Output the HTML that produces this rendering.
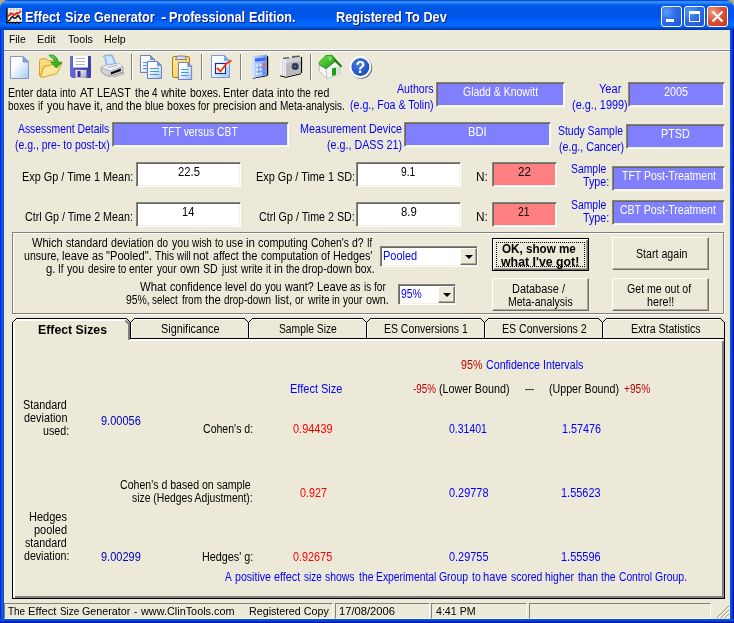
<!DOCTYPE html>
<html>
<head>
<meta charset="utf-8">
<title>Effect Size Generator - Professional Edition.</title>
<style>
*{box-sizing:border-box;margin:0;padding:0}
html,body{width:734px;height:623px;overflow:hidden;background:#ece9d8}
body{font-family:"Liberation Sans",sans-serif;font-size:12.5px;color:#000;position:relative}
.a{position:absolute}
.t{position:absolute;white-space:pre;transform-origin:0 0;display:block}
.b{font-size:12.5px;line-height:14px}
.B{font-size:12.5px;line-height:14px;font-weight:bold}
.m{font-size:11px;line-height:13px}
.T{font-size:14px;line-height:16px;font-weight:bold}
.bl{color:#0000ff}
.nv{color:#0000c0}
.rd{color:#ff0000}
.dr{color:#c00000}
.wh{color:#fff}
.tw{color:#fff;text-shadow:1px 1px 0 #0a1883}
#title{left:0;top:0;width:734px;height:30px;border-radius:8px 8px 0 0;
 background:linear-gradient(to bottom,#0847cc 0,#0b52de 1px,#3a90fc 1.6px,#3088fb 3px,#0c6cf4 4px,#0260eb 5px,#0057e5 7px,#0054e3 10px,#0055eb 17px,#005bf5 20px,#0268fb 23px,#0366f6 25.5px,#0058e0 27px,#004cd0 28px,#0040bc 29px,#0036aa 30px)}
.bdl{left:0;top:30px;width:4px;height:593px;background:linear-gradient(to right,#0019cf 0,#0831d9 25%,#166aee 50%,#0855dd 75%,#0048d8 100%)}
.bdr{left:730px;top:30px;width:4px;height:593px;background:linear-gradient(to right,#0048d8 0,#0855dd 25%,#0441d8 50%,#001dbc 75%,#00138c 100%)}
.bdb{left:0;top:619px;width:734px;height:4px;background:linear-gradient(to bottom,#0048d8 0,#0855dd 25%,#0441d8 50%,#001dbc 75%,#00138c 100%)}
.tb{top:6px;width:21px;height:21px;border:1px solid #fff;border-radius:3px;background:radial-gradient(circle at 25% 25%,#5a9cff 0,#2d6cea 45%,#2054d6 100%)}
.tb.x{background:radial-gradient(circle at 25% 25%,#f09a82 0,#dc5234 45%,#c03820 100%)}
.box{border:1px solid;border-color:#848480 #fff #fff #848480;box-shadow:inset 1px 1px #6a685e,inset -1px -1px #f4f2e8;background:#8080ff;height:25px}
.box.w{background:#fff}
.box.p{background:#ff8080}
.btn{border:1px solid;border-color:#fff #716f64 #716f64 #fff;box-shadow:inset -1px -1px #aca899;background:#ece9d8;width:97px;height:33px}
.cmb{border:1px solid;border-color:#848480 #fff #fff #848480;box-shadow:inset 1px 1px #6a685e,inset -1px -1px #f4f2e8;background:#fff;height:21px}
.cmb i{position:absolute;right:0;top:1px;bottom:1px;width:17px;background:#ece9d8;border:1px solid;border-color:#fff #716f64 #716f64 #fff;box-shadow:inset -1px -1px #aca899}
.cmb i:after{content:"";position:absolute;left:4px;top:6px;border:4px solid transparent;border-top:4px solid #000;border-bottom:0}
.sp{top:603px;height:16px;border:1px solid;border-color:#808080 #fff #fff #808080}
</style>
</head>
<body>
<div id="win" style="position:absolute;left:0;top:0;width:734px;height:623px;will-change:transform">
<div class="a" style="left:0;top:0;width:734px;height:8px;background:#b5ad7a"></div>
<div class="a" id="title">
<svg class="a" style="left:6px;top:8px" width="16" height="16" viewBox="0 0 16 16"><rect x="1" y="0" width="15" height="15" fill="#f4f2ee"/><path d="M1 1.500h15M1 4.500h15M1 7.500h15M1 10.500h15M1 13.500h15" stroke="#b4b0a8" stroke-width="1.500" stroke-dasharray="1.500 1.500"/><path d="M2 8.500l2.500-3 2 .2 1.500 1.500 2.500-2 1.500.5 3-3" fill="none" stroke="#f01010" stroke-width="1.500"/><path d="M2 13l1.500-.5 1.500-2.500 1.500-1.500 1.500 1.500h1.500l2.500-2.500 3 4" fill="none" stroke="#101010" stroke-width="1.400"/><path d="M1 0v15.500M0 14.500h16" stroke="#000" stroke-width="1.200" fill="none"/><path d="M0 2.500h1M0 5.500h1M0 8.500h1M0 11.500h1M3.500 15v1M6.500 15v1M9.500 15v1M12.500 15v1" stroke="#000" stroke-width="1"/></svg>
<div class="a tb" style="left:661px"><div class="a" style="left:4px;top:12px;width:8px;height:3px;background:#fff"></div></div>
<div class="a tb" style="left:684px"><div class="a" style="left:4px;top:4px;width:11px;height:11px;border:1px solid #fff;border-top-width:3px"></div></div>
<div class="a tb x" style="left:707px"><svg class="a" style="left:0;top:0" width="19" height="19"><path d="M4.500 4.500l10 10M14.500 4.500l-10 10" stroke="#fff" stroke-width="2.300" fill="none"/></svg></div>
</div>
<div class="a bdl"></div><div class="a bdr"></div><div class="a bdb"></div>
<div class="a" style="left:4px;top:49px;width:726px;height:3px;background:#808080;border-top:1px solid #fff;border-bottom:1px solid #fff"></div>
<svg class="a" style="left:0;top:52px" width="400" height="30" viewBox="0 52 400 30">
<defs>
<linearGradient id="pg" x1="0" y1="0" x2="1" y2="1"><stop offset="0" stop-color="#fff"/><stop offset=".35" stop-color="#fbfdff"/><stop offset="1" stop-color="#9ccbf0"/></linearGradient>
<linearGradient id="fd" x1="0" y1="0" x2="1" y2="1"><stop offset="0" stop-color="#fbe9a0"/><stop offset="1" stop-color="#f0c850"/></linearGradient>
<linearGradient id="gr" x1="0" y1="0" x2="1" y2="1"><stop offset="0" stop-color="#70e048"/><stop offset="1" stop-color="#1c9a18"/></linearGradient>
<linearGradient id="fl" x1="0" y1="0" x2="1" y2="0"><stop offset="0" stop-color="#6a6ad8"/><stop offset=".5" stop-color="#5050c0"/><stop offset="1" stop-color="#3c3ca8"/></linearGradient>
<linearGradient id="mt" x1="0" y1="0" x2="1" y2="1"><stop offset="0" stop-color="#fff"/><stop offset="1" stop-color="#a0a0b0"/></linearGradient>
<linearGradient id="cl" x1="0" y1="0" x2="1" y2="0"><stop offset="0" stop-color="#c0d4ff"/><stop offset=".6" stop-color="#98b8ff"/><stop offset="1" stop-color="#7090ec"/></linearGradient>
<radialGradient id="hp" cx=".4" cy=".35" r=".7"><stop offset="0" stop-color="#4a80e8"/><stop offset="1" stop-color="#1848b8"/></radialGradient>
<g id="doc"><path d="M.5 .5h10l4 4v13h-14z" fill="url(#pg)" stroke="#7878c0"/><path d="M10.5 .5v4h4z" fill="#58a8f0" stroke="#7878c0" stroke-width=".8"/></g>
<g id="sep"><rect x="0" y="54" width="1" height="26" fill="#808080"/><rect x="1" y="54" width="1" height="26" fill="#fff"/></g>
</defs>
<!-- new -->
<path d="M10.500 56.500h12.500l5.500 5.500v16.500h-18z" fill="url(#pg)" stroke="#8484c8" stroke-width=".9"/>
<path d="M23 56.500v5.500h5.500z" fill="#62acf2" stroke="#8484c8" stroke-width=".8"/>
<!-- open -->
<path d="M39.500 60.500l1.200-1.700h5.800l1.500 2h8v3.500l-12.500 2.400-3 9.800-1-1z" fill="#f8dc84" stroke="#d8a21c" stroke-width="1"/>
<path d="M40.500 76.800l3.300-10.200 8.700-2 9.500-1.600-5 10.500-13.500 3.700z" fill="#fbe89c" stroke="#d8a21c" stroke-width="1"/>
<path d="M49.200 55l4.100.2q4 1.800 5.300 7.100h3.400l-5.600 5.700-5.600-5.700h4.200q-.5-3.800-5-5.800z" fill="url(#gr)" stroke="#0c8a10" stroke-width=".8"/>
<!-- save -->
<path d="M71 56h19a1 1 0 0 1 1 1v20a1 1 0 0 1-1 1h-18l-2-2v-19a1 1 0 0 1 1-1z" fill="url(#fl)"/>
<rect x="73" y="56" width="15" height="11.500" fill="#fff"/>
<path d="M76 58.500h9M76 61.500h9M76 64.500h9" stroke="#a4a4b8" stroke-width="1" stroke-dasharray="2.500 .5"/>
<rect x="75.500" y="70" width="11" height="8" fill="url(#mt)"/>
<rect x="77.500" y="71" width="3" height="6" fill="#3030a0"/>
<!-- print -->
<path d="M103.200 56.300l3.800-1.200h5l3.800 8.600-9.400 2.200-1.200-7.400z" fill="#b4dcff" stroke="#7484e0" stroke-width=".8"/>
<path d="M107 57l3.500-.5 2.500 6-4.500 1z" fill="#d8f0ff" opacity=".8"/>
<path d="M101.200 67.400l5-2 13.400-2.100 3.300 3.100v5.800l-12.500 4-4.200-.4-5-4z" fill="#d4d4dc" stroke="#8c8c94" stroke-width=".8"/>
<path d="M101.200 67.400l5-2 13.400-2.100 3.300 3.100-12.500 4.800z" fill="#ececf2"/>
<path d="M107.500 67.500l10-2.500" stroke="#a8a8b0" stroke-width=".9" fill="none"/>
<path d="M110.400 71.200v5M101.200 67.400l9.200 3.800 12.500-4.800" fill="none" stroke="#9c9ca4" stroke-width=".7"/>
<path d="M111 72.200l9.800-3.600v2.400l-9.800 3.400z" fill="#080808"/>
<path d="M112 75.500l9-3 3 .2v1l-10.500 3.500z" fill="#c8c8d0" stroke="#9090a0" stroke-width=".5"/>
<use href="#sep" x="131"/>
<!-- copy -->
<use href="#doc" x="140" y="55"/>
<path d="M143 62.500h6M143 65.500h4M143 68.500h4" stroke="#4898e0" stroke-width="1"/>
<use href="#doc" x="147" y="61"/>
<path d="M150 68.500h9M150 71.500h9M150 74.500h9" stroke="#4898e0" stroke-width="1"/>
<!-- paste -->
<rect x="172.500" y="56.500" width="17" height="21" rx="1.500" fill="url(#fd)" stroke="#b87c10"/>
<path d="M175.500 59.500l1.500-3.500h8l1.500 3.500z" fill="#d8d8e0" stroke="#787890" stroke-width=".9"/>
<use href="#doc" transform="translate(178 62) scale(.94 1)"/>
<path d="M181 69.500h7.500M181 72.500h7.500M181 75.500h7.500" stroke="#4898e0" stroke-width="1"/>
<use href="#sep" x="201"/>
<!-- check -->
<path d="M211.500 55.500h13l5 5v17h-18z" fill="url(#pg)" stroke="#8098d8"/>
<path d="M224.500 55.500v5h5z" fill="#6ab0f0" stroke="#8098d8" stroke-width=".8"/>
<rect x="215.500" y="63.500" width="10" height="10" fill="#fff" stroke="#103090" stroke-width="1.200"/>
<path d="M217 68l3.500 3.500 6-8 5-3" fill="none" stroke="#ff3000" stroke-width="1.800"/>
<use href="#sep" x="240"/>
<!-- calc -->
<path d="M253 77.500l14-2.500v1.200l-14 2.600z" fill="#000"/>
<path d="M267 56v19.500h1.200v-19z" fill="#000"/>
<path d="M252 56.200l15-1.400v20.500l-15 3z" fill="url(#cl)"/>
<path d="M252.300 56.500l2.200-.2v21.500l-2.200.5z" fill="#dce8ff" opacity=".85"/>
<path d="M255 58.600l10.500-1v3l-10.500 1.200z" fill="#3a6aea"/>
<g fill="#e4ecff"><circle cx="257" cy="65.500" r="1.200"/><circle cx="260.500" cy="65" r="1.100"/><circle cx="257" cy="69.800" r="1.200"/><circle cx="260.500" cy="69.300" r="1.100"/><circle cx="257" cy="74" r="1.200"/><circle cx="260.500" cy="73.500" r="1.100"/></g>
<g fill="#6080e0"><circle cx="264" cy="69" r="1.200"/><circle cx="264" cy="73" r="1.200"/><circle cx="258.800" cy="67.600" r=".9"/><circle cx="262.300" cy="67.200" r=".9"/><circle cx="258.800" cy="71.800" r=".9"/><circle cx="262.300" cy="71.400" r=".9"/></g>
<rect x="262.800" y="63" width="2.600" height="3.800" rx="1" fill="#e86838"/>
<!-- camera -->
<path d="M280 75.200l6 1.600 15-3.500v1l-15 3.500-6-1.600z" fill="#000"/>
<path d="M300.700 57h1.400v16h-1.400z" fill="#000"/>
<path d="M283 57.800l6-.8v2.500l-6 .6z" fill="#505050"/>
<path d="M292 56l8-.5v2.200l-8 .8z" fill="#606060"/>
<path d="M286 58.800l14.700-1.800v15.800l-14.700 3.600z" fill="#b8b8bc"/>
<path d="M286 58.800l14.700-1.800v4l-14.700 2.500z" fill="#d0d0d4"/>
<path d="M280 59.500l6-.7v17.600l-6-1.500z" fill="#f0f0f2"/>
<path d="M282.500 60v15.500M284.500 60v16" stroke="#c8c8cc" stroke-width=".7"/>
<circle cx="295.200" cy="66.400" r="4.600" fill="#d8d8dc"/>
<circle cx="295.200" cy="66.400" r="3.800" fill="#505054"/>
<circle cx="295.200" cy="66.400" r="2.500" fill="#2c2c30"/>
<circle cx="295.200" cy="66.400" r="1.300" fill="#2a6adc"/>
<use href="#sep" x="310"/>
<!-- home -->
<path d="M319.300 64.500l6.700 4.100 1 9.900-7.700-7.300z" fill="#fcfcfc" stroke="#a8a8a8" stroke-width=".7"/>
<path d="M326 68.600l8.700-7 5.800 5.400v7.100l-13.500 4.400z" fill="#f4f4f2" stroke="#b8b8b8" stroke-width=".6"/>
<path d="M337 65.500l3.500 1.500v7.100l-3.500 1.100z" fill="#dcdcdc"/>
<path d="M332 68.400l4.100-1v7.700l-4.100 1z" fill="#18a018"/>
<path d="M332.300 55.400l9.800 10.600-1.200 1.400-7.400-7.400z" fill="#0a7a0a"/>
<path d="M326 55.400h6.300l2.600 6.200-8.900 7.200-6.500-4-.3-2.600z" fill="url(#gr)" stroke="#109010" stroke-width=".8"/>
<path d="M328.500 56.500l2.500 0 1 3-3 2z" fill="#90f070" opacity=".7"/>
<!-- help -->
<circle cx="361.200" cy="67.800" r="11" fill="#30305c" opacity=".75"/>
<circle cx="360.400" cy="67" r="11" fill="#fff"/>
<circle cx="360.400" cy="67" r="9" fill="url(#hp)"/>
<text x="360.400" y="72.500" text-anchor="middle" font-family="Liberation Sans,sans-serif" font-weight="bold" font-size="16" fill="#fff">?</text>
</svg>

<div class="a box" style="left:436px;top:82px;width:129px"></div>
<div class="a box" style="left:628px;top:82px;width:97px"></div>
<div class="a box" style="left:112px;top:122px;width:177px"></div>
<div class="a box" style="left:404px;top:122px;width:147px"></div>
<div class="a box" style="left:626px;top:124px;width:99px"></div>
<div class="a box w" style="left:136px;top:162px;width:105px"></div>
<div class="a box w" style="left:356px;top:162px;width:105px"></div>
<div class="a box p" style="left:492px;top:162px;width:65px"></div>
<div class="a box" style="left:612px;top:166px;width:113px"></div>
<div class="a box w" style="left:136px;top:202px;width:105px"></div>
<div class="a box w" style="left:356px;top:202px;width:105px"></div>
<div class="a box p" style="left:492px;top:202px;width:65px"></div>
<div class="a box" style="left:612px;top:200px;width:113px"></div>

<div class="a" style="left:13px;top:233px;width:712px;height:82px;border:1px solid #fff"></div>
<div class="a" style="left:12px;top:232px;width:712px;height:82px;border:1px solid #808080"></div>
<div class="a cmb" style="left:380px;top:246px;width:98px"><i></i></div>
<div class="a cmb" style="left:398px;top:284px;width:58px"><i></i></div>
<div class="a btn" style="left:492px;top:238px;border-color:#000;box-shadow:inset 1px 1px #fff,inset -1px -1px #716f64,inset -2px -2px #aca899"><div class="a" style="left:3px;top:3px;right:3px;bottom:3px;border:1px dotted #000"></div></div>
<div class="a btn" style="left:612px;top:237px"></div>
<div class="a btn" style="left:492px;top:278px"></div>
<div class="a btn" style="left:612px;top:278px"></div>
<svg class="a" style="left:0;top:0" width="734" height="623" shape-rendering="crispEdges"><rect x="12" y="322" width="1" height="277" fill="#000"/><rect x="13" y="322" width="2" height="275" fill="#fff"/><rect x="131" y="338" width="594" height="1" fill="#000"/><rect x="130" y="339" width="592" height="2" fill="#fff"/><rect x="128" y="340" width="2" height="1" fill="#fff"/><rect x="724" y="338" width="1" height="261" fill="#000"/><rect x="722" y="341" width="2" height="257" fill="#808080"/><rect x="12" y="598" width="713" height="1" fill="#000"/><rect x="15" y="596" width="709" height="2" fill="#808080"/><rect x="16" y="318" width="111" height="1" fill="#000"/><rect x="16" y="319" width="111" height="2" fill="#fff"/><path d="M12.5 322.5L16.5 318.5" stroke="#000" fill="none" shape-rendering="auto"/><path d="M14 322.5L17.5 319.500" stroke="#fff" stroke-width="1.500" fill="none" shape-rendering="auto"/><path d="M126.5 318.5L130.5 322.5" stroke="#000" fill="none" shape-rendering="auto"/><rect x="128" y="322" width="2" height="18" fill="#808080"/><path d="M125.500 320.500L128.500 323.500" stroke="#808080" stroke-width="2" fill="none" shape-rendering="auto"/><rect x="130" y="322" width="1" height="17" fill="#000"/><rect x="134" y="318" width="111" height="1" fill="#000"/><rect x="134" y="319" width="110" height="1" fill="#fff"/><path d="M130.5 322.5L134.5 318.5" stroke="#000" fill="none" shape-rendering="auto"/><path d="M244.5 318.5L248.5 322.5" stroke="#000" fill="none" shape-rendering="auto"/><rect x="130" y="322" width="1" height="17" fill="#000"/><rect x="131" y="322" width="1" height="16" fill="#fff"/><rect x="252" y="318" width="111" height="1" fill="#000"/><rect x="252" y="319" width="110" height="1" fill="#fff"/><path d="M248.5 322.5L252.5 318.5" stroke="#000" fill="none" shape-rendering="auto"/><path d="M362.5 318.5L366.5 322.5" stroke="#000" fill="none" shape-rendering="auto"/><rect x="248" y="322" width="1" height="17" fill="#000"/><rect x="249" y="322" width="1" height="16" fill="#fff"/><rect x="370" y="318" width="111" height="1" fill="#000"/><rect x="370" y="319" width="110" height="1" fill="#fff"/><path d="M366.5 322.5L370.5 318.5" stroke="#000" fill="none" shape-rendering="auto"/><path d="M480.5 318.5L484.5 322.5" stroke="#000" fill="none" shape-rendering="auto"/><rect x="366" y="322" width="1" height="17" fill="#000"/><rect x="367" y="322" width="1" height="16" fill="#fff"/><rect x="488" y="318" width="111" height="1" fill="#000"/><rect x="488" y="319" width="110" height="1" fill="#fff"/><path d="M484.5 322.5L488.5 318.5" stroke="#000" fill="none" shape-rendering="auto"/><path d="M598.5 318.5L602.5 322.5" stroke="#000" fill="none" shape-rendering="auto"/><rect x="484" y="322" width="1" height="17" fill="#000"/><rect x="485" y="322" width="1" height="16" fill="#fff"/><rect x="606" y="318" width="115" height="1" fill="#000"/><rect x="606" y="319" width="114" height="1" fill="#fff"/><path d="M602.5 322.5L606.5 318.5" stroke="#000" fill="none" shape-rendering="auto"/><path d="M720.5 318.5L724.5 322.5" stroke="#000" fill="none" shape-rendering="auto"/><rect x="602" y="322" width="1" height="17" fill="#000"/><rect x="603" y="322" width="1" height="16" fill="#fff"/><rect x="724" y="322" width="1" height="17" fill="#000"/></svg>
<div class="a sp" style="left:4px;width:329px"></div>
<div class="a sp" style="left:335px;width:95px"></div>
<div class="a sp" style="left:431px;width:96px"></div>
<div class="a sp" style="left:529px;width:182px"></div>
<svg class="a" style="left:716px;top:605px" width="14" height="14"><path d="M13 1L1 13M13 5L5 13M13 9L9 13" stroke="#aca899" stroke-width="1.400"/><path d="M13 2.200L2.200 13M13 6.200L6.200 13M13 10.200L10.200 13" stroke="#fff" stroke-width="1"/></svg>
<div id="txt">
<div><span class="t T tw" style="left:25.20px;top:9px;transform:scaleX(0.9090)">Effect </span><span class="t T tw" style="left:65.20px;top:9px;transform:scaleX(0.9109)">Size </span><span class="t T tw" style="left:94.40px;top:9px;transform:scaleX(0.9068)">Generator </span><span class="t T tw" style="left:160.79px;top:9px;transform:scaleX(1.1563)">- </span><span class="t T tw" style="left:169.01px;top:9px;transform:scaleX(0.9062)">Professional </span><span class="t T tw" style="left:249.41px;top:9px;transform:scaleX(0.9048)">Edition.</span></div>
<div><span class="t T tw" style="left:336.01px;top:9px;transform:scaleX(0.9084)">Registered To Dev</span></div>
<div><span class="t m" style="left:8.89px;top:33px;transform:scaleX(0.9379)">File</span></div>
<div><span class="t m" style="left:36.66px;top:33px;transform:scaleX(0.9761)">Edit</span></div>
<div><span class="t m" style="left:67.83px;top:33px;transform:scaleX(0.9697)">Tools</span></div>
<div><span class="t m" style="left:103.78px;top:33px;transform:scaleX(0.9569)">Help</span></div>
<div><span class="t b" style="left:7.87px;top:86px;transform:scaleX(0.8454)">Enter data </span><span class="t b" style="left:59.78px;top:86px;transform:scaleX(0.7900)">into </span><span class="t b" style="left:79.73px;top:86px;transform:scaleX(0.9200)">AT </span><span class="t b" style="left:97.27px;top:86px;transform:scaleX(0.8514)">LEAST </span><span class="t b" style="left:134.80px;top:86px;transform:scaleX(0.8299)">the </span><span class="t b" style="left:152.30px;top:86px;transform:scaleX(0.7900)">4 </span><span class="t b" style="left:161.37px;top:86px;transform:scaleX(0.8694)">white </span><span class="t b" style="left:189.64px;top:86px;transform:scaleX(0.8391)">boxes. </span><span class="t b" style="left:222.76px;top:86px;transform:scaleX(0.8599)">Enter </span><span class="t b" style="left:252.05px;top:86px;transform:scaleX(0.8952)">data </span><span class="t b" style="left:277.23px;top:86px;transform:scaleX(0.8534)">into </span><span class="t b" style="left:297.44px;top:86px;transform:scaleX(0.7900)">the </span><span class="t b" style="left:313.54px;top:86px;transform:scaleX(0.8442)">red</span></div>
<div><span class="t b bl" style="left:397.10px;top:82px;transform:scaleX(0.8480)">Authors</span></div>
<div><span class="t b wh" style="left:463.21px;top:85px;transform:scaleX(0.8374)">Gladd &amp; Knowitt</span></div>
<div><span class="t b bl" style="left:598.93px;top:82px;transform:scaleX(0.8840)">Year</span></div>
<div><span class="t b wh" style="left:664.29px;top:85px;transform:scaleX(0.8684)">2005</span></div>
<div><span class="t b" style="left:8.07px;top:99px;transform:scaleX(0.8048)">boxes </span><span class="t b" style="left:37.81px;top:99px;transform:scaleX(0.7900)">if </span><span class="t b" style="left:46.60px;top:99px;transform:scaleX(0.8637)">you </span><span class="t b" style="left:66.70px;top:99px;transform:scaleX(0.8909)">have </span><span class="t b" style="left:93.75px;top:99px;transform:scaleX(0.9200)">it, </span><span class="t b" style="left:105.58px;top:99px;transform:scaleX(0.8298)">and </span><span class="t b" style="left:126.30px;top:99px;transform:scaleX(0.9010)">the </span><span class="t b" style="left:144.87px;top:99px;transform:scaleX(0.8011)">blue </span><span class="t b" style="left:166.74px;top:99px;transform:scaleX(0.8451)">boxes </span><span class="t b" style="left:198.26px;top:99px;transform:scaleX(0.7900)">for </span><span class="t b" style="left:212.73px;top:99px;transform:scaleX(0.8632)">precision </span><span class="t b" style="left:258.96px;top:99px;transform:scaleX(0.8652)">and </span><span class="t b" style="left:279.61px;top:99px;transform:scaleX(0.8040)">Meta-analysis.</span></div>
<div><span class="t b bl" style="left:350.00px;top:98px;transform:scaleX(0.8499)">(e.g., Foa &amp; Tolin)</span></div>
<div><span class="t b bl" style="left:571.79px;top:98px;transform:scaleX(0.8709)">(e.g., 1999)</span></div>
<div><span class="t b bl" style="left:18.00px;top:122px;transform:scaleX(0.8311)">Assessment Details</span></div>
<div><span class="t b bl" style="left:299.76px;top:122px;transform:scaleX(0.8643)">Measurement Device</span></div>
<div><span class="t b bl" style="left:558.17px;top:124px;transform:scaleX(0.8359)">Study Sample</span></div>
<div><span class="t b wh" style="left:162.14px;top:125px;transform:scaleX(0.8284)">TFT versus CBT</span></div>
<div><span class="t b wh" style="left:467.72px;top:125px;transform:scaleX(0.8969)">BDI</span></div>
<div><span class="t b wh" style="left:660.86px;top:127px;transform:scaleX(0.8645)">PTSD</span></div>
<div><span class="t b bl" style="left:15.01px;top:138px;transform:scaleX(0.8375)">(e.g., pre- to post-tx)</span></div>
<div><span class="t b bl" style="left:326.90px;top:138px;transform:scaleX(0.8574)">(e.g., DASS 21)</span></div>
<div><span class="t b bl" style="left:558.60px;top:140px;transform:scaleX(0.8526)">(e.g., Cancer)</span></div>
<div><span class="t b" style="left:178.07px;top:165px;transform:scaleX(0.8995)">22.5</span></div>
<div><span class="t b" style="left:401.12px;top:165px;transform:scaleX(0.8167)">9.1</span></div>
<div><span class="t b" style="left:518.16px;top:165px;transform:scaleX(0.9211)">22</span></div>
<div><span class="t b bl" style="left:571.28px;top:162px;transform:scaleX(0.8316)">Sample</span></div>
<div><span class="t b" style="left:21.95px;top:170px;transform:scaleX(0.8702)">Exp Gp / Time 1 Mean:</span></div>
<div><span class="t b" style="left:255.85px;top:170px;transform:scaleX(0.8702)">Exp Gp / Time 1 SD:</span></div>
<div><span class="t b" style="left:475.88px;top:170px;transform:scaleX(0.9428)">N:</span></div>
<div><span class="t b wh" style="left:622.24px;top:169px;transform:scaleX(0.8400)">TFT Post-Treatment</span></div>
<div><span class="t b bl" style="left:583.03px;top:175px;transform:scaleX(0.8616)">Type:</span></div>
<div><span class="t b bl" style="left:571.28px;top:198px;transform:scaleX(0.8316)">Sample</span></div>
<div><span class="t b" style="left:182.01px;top:205px;transform:scaleX(0.8820)">14</span></div>
<div><span class="t b" style="left:401.25px;top:205px;transform:scaleX(0.9042)">8.9</span></div>
<div><span class="t b" style="left:518.22px;top:205px;transform:scaleX(0.8274)">21</span></div>
<div><span class="t b wh" style="left:620.31px;top:203px;transform:scaleX(0.8415)">CBT Post-Treatment</span></div>
<div><span class="t b" style="left:25.30px;top:210px;transform:scaleX(0.8580)">Ctrl Gp / Time 2 Mean:</span></div>
<div><span class="t b" style="left:259.20px;top:210px;transform:scaleX(0.8564)">Ctrl Gp / Time 2 SD:</span></div>
<div><span class="t b" style="left:475.88px;top:210px;transform:scaleX(0.9428)">N:</span></div>
<div><span class="t b bl" style="left:583.03px;top:211px;transform:scaleX(0.8616)">Type:</span></div>
<div><span class="t b" style="left:32.30px;top:236px;transform:scaleX(0.8846)">Which </span><span class="t b" style="left:66.23px;top:236px;transform:scaleX(0.8587)">standard </span><span class="t b" style="left:111.07px;top:236px;transform:scaleX(0.8540)">deviation </span><span class="t b" style="left:156.89px;top:236px;transform:scaleX(0.7919)">do </span><span class="t b" style="left:171.50px;top:236px;transform:scaleX(0.8431)">you </span><span class="t b" style="left:192.06px;top:236px;transform:scaleX(0.7959)">wish </span><span class="t b" style="left:214.88px;top:236px;transform:scaleX(0.7900)">to </span><span class="t b" style="left:225.54px;top:236px;transform:scaleX(0.8428)">use </span><span class="t b" style="left:245.69px;top:236px;transform:scaleX(0.9200)">in </span><span class="t b" style="left:257.96px;top:236px;transform:scaleX(0.8625)">computing </span><span class="t b" style="left:310.61px;top:236px;transform:scaleX(0.8361)">Cohen's </span><span class="t b" style="left:351.97px;top:236px;transform:scaleX(0.8332)">d? </span><span class="t b" style="left:366.57px;top:236px;transform:scaleX(0.7485)">If</span></div>
<div><span class="t B" style="left:501.64px;top:242px;transform:scaleX(0.9327)">OK, show me</span></div>
<div><span class="t b" style="left:23.84px;top:249px;transform:scaleX(0.8455)">unsure, </span><span class="t b" style="left:61.60px;top:249px;transform:scaleX(0.8988)">leave </span><span class="t b" style="left:91.66px;top:249px;transform:scaleX(0.8615)">as </span><span class="t b" style="left:106.35px;top:249px;transform:scaleX(0.8925)">&quot;Pooled&quot;. </span><span class="t b" style="left:154.94px;top:249px;transform:scaleX(0.8034)">This </span><span class="t b" style="left:177.30px;top:249px;transform:scaleX(0.7900)">will </span><span class="t b" style="left:193.20px;top:249px;transform:scaleX(0.9015)">not </span><span class="t b" style="left:212.57px;top:249px;transform:scaleX(0.8500)">affect </span><span class="t b" style="left:242.40px;top:249px;transform:scaleX(0.8891)">the </span><span class="t b" style="left:261.07px;top:249px;transform:scaleX(0.8388)">computation </span><span class="t b" style="left:321.27px;top:249px;transform:scaleX(0.8534)">of </span><span class="t b" style="left:333.35px;top:249px;transform:scaleX(0.8686)">Hedges'</span></div>
<div><span class="t b bl" style="left:382.74px;top:249px;transform:scaleX(0.8780)">Pooled</span></div>
<div><span class="t b" style="left:635.57px;top:247px;transform:scaleX(0.8507)">Start again</span></div>
<div><span class="t B" style="left:501.49px;top:255px;transform:scaleX(0.9870)">what I've got!</span></div>
<div><span class="t b" style="left:46.24px;top:262px;transform:scaleX(0.9096)">g. </span><span class="t b" style="left:57.90px;top:262px;transform:scaleX(0.7900)">If </span><span class="t b" style="left:67.40px;top:262px;transform:scaleX(0.8482)">you </span><span class="t b" style="left:87.59px;top:262px;transform:scaleX(0.8025)">desire </span><span class="t b" style="left:118.23px;top:262px;transform:scaleX(0.7900)">to </span><span class="t b" style="left:129.47px;top:262px;transform:scaleX(0.8345)">enter </span><span class="t b" style="left:157.20px;top:262px;transform:scaleX(0.8039)">your </span><span class="t b" style="left:180.36px;top:262px;transform:scaleX(0.8609)">own </span><span class="t b" style="left:203.17px;top:262px;transform:scaleX(0.8464)">SD </span><span class="t b" style="left:221.65px;top:262px;transform:scaleX(0.7900)">just </span><span class="t b" style="left:241.06px;top:262px;transform:scaleX(0.8282)">write </span><span class="t b" style="left:265.81px;top:262px;transform:scaleX(0.7900)">it </span><span class="t b" style="left:274.09px;top:262px;transform:scaleX(0.9200)">in </span><span class="t b" style="left:285.94px;top:262px;transform:scaleX(0.7900)">the </span><span class="t b" style="left:302.37px;top:262px;transform:scaleX(0.8470)">drop-down </span><span class="t b" style="left:355.15px;top:262px;transform:scaleX(0.8289)">box.</span></div>
<div><span class="t b" style="left:140.00px;top:280px;transform:scaleX(0.9036)">What </span><span class="t b" style="left:170.06px;top:280px;transform:scaleX(0.8596)">confidence </span><span class="t b" style="left:224.94px;top:280px;transform:scaleX(0.8505)">level </span><span class="t b" style="left:249.78px;top:280px;transform:scaleX(0.8303)">do </span><span class="t b" style="left:264.90px;top:280px;transform:scaleX(0.8225)">you </span><span class="t b" style="left:285.07px;top:280px;transform:scaleX(0.8634)">want? </span><span class="t b" style="left:316.73px;top:280px;transform:scaleX(0.8933)">Leave </span><span class="t b" style="left:350.39px;top:280px;transform:scaleX(0.7971)">as </span><span class="t b" style="left:363.68px;top:280px;transform:scaleX(0.7900)">is </span><span class="t b" style="left:374.20px;top:280px;transform:scaleX(0.8123)">for</span></div>
<div><span class="t b" style="left:512.25px;top:282px;transform:scaleX(0.8753)">Database /</span></div>
<div><span class="t b" style="left:627.10px;top:282px;transform:scaleX(0.8472)">Get me out of</span></div>
<div><span class="t b bl" style="left:401.01px;top:287px;transform:scaleX(0.8313)">95%</span></div>
<div><span class="t b" style="left:126.21px;top:293px;transform:scaleX(0.8305)">95%, </span><span class="t b" style="left:152.41px;top:293px;transform:scaleX(0.7900)">select </span><span class="t b" style="left:181.70px;top:293px;transform:scaleX(0.8007)">from </span><span class="t b" style="left:205.20px;top:293px;transform:scaleX(0.9129)">the </span><span class="t b" style="left:224.29px;top:293px;transform:scaleX(0.7952)">drop-down </span><span class="t b" style="left:274.55px;top:293px;transform:scaleX(0.9200)">list, </span><span class="t b" style="left:294.93px;top:293px;transform:scaleX(0.7900)">or </span><span class="t b" style="left:307.56px;top:293px;transform:scaleX(0.8244)">write </span><span class="t b" style="left:332.27px;top:293px;transform:scaleX(0.8004)">in </span><span class="t b" style="left:343.47px;top:293px;transform:scaleX(0.7900)">your </span><span class="t b" style="left:366.26px;top:293px;transform:scaleX(0.8640)">own.</span></div>
<div><span class="t b" style="left:507.98px;top:295px;transform:scaleX(0.8383)">Meta-analysis</span></div>
<div><span class="t b" style="left:647.03px;top:295px;transform:scaleX(0.8551)">here!!</span></div>
<div><span class="t B" style="left:37.83px;top:323px;transform:scaleX(0.9829)">Effect Sizes</span></div>
<div><span class="t b" style="left:161.26px;top:322px;transform:scaleX(0.8676)">Significance</span></div>
<div><span class="t b" style="left:279.48px;top:322px;transform:scaleX(0.8243)">Sample Size</span></div>
<div><span class="t b" style="left:384.18px;top:322px;transform:scaleX(0.8370)">ES Conversions 1</span></div>
<div><span class="t b" style="left:502.07px;top:322px;transform:scaleX(0.8461)">ES Conversions 2</span></div>
<div><span class="t b" style="left:631.18px;top:322px;transform:scaleX(0.8414)">Extra Statistics</span></div>
<div><span class="t b dr" style="left:461.20px;top:358px;transform:scaleX(0.8603)">95%</span></div>
<div><span class="t b bl" style="left:486.40px;top:358px;transform:scaleX(0.8542)">Confidence Intervals</span></div>
<div><span class="t b bl" style="left:290.34px;top:382px;transform:scaleX(0.8805)">Effect Size</span></div>
<div><span class="t b dr" style="left:412.59px;top:382px;transform:scaleX(0.7847)">-95%</span></div>
<div><span class="t b" style="left:438.70px;top:382px;transform:scaleX(0.8606)">(Lower Bound)</span></div>
<div><span class="t b" style="left:524.51px;top:382px;transform:scaleX(0.7299)">---</span></div>
<div><span class="t b" style="left:549.10px;top:382px;transform:scaleX(0.8532)">(Upper Bound)</span></div>
<div><span class="t b dr" style="left:624.33px;top:382px;transform:scaleX(0.8100)">+95%</span></div>
<div><span class="t b" style="left:23.16px;top:398px;transform:scaleX(0.8642)">Standard</span></div>
<div><span class="t b" style="left:23.56px;top:411px;transform:scaleX(0.8683)">deviation</span></div>
<div><span class="t b nv" style="left:101.08px;top:414px;transform:scaleX(0.8800)">9.00056</span></div>
<div><span class="t b" style="left:42.83px;top:424px;transform:scaleX(0.8546)">used:</span></div>
<div><span class="t b" style="left:203.01px;top:422px;transform:scaleX(0.8447)">Cohen's d:</span></div>
<div><span class="t b rd" style="left:293.36px;top:422px;transform:scaleX(0.8761)">0.94439</span></div>
<div><span class="t b bl" style="left:449.37px;top:422px;transform:scaleX(0.8400)">0.31401</span></div>
<div><span class="t b bl" style="left:561.62px;top:422px;transform:scaleX(0.8657)">1.57476</span></div>
<div><span class="t b" style="left:120.10px;top:478px;transform:scaleX(0.8457)">Cohen's d based on sample</span></div>
<div><span class="t b rd" style="left:299.56px;top:486px;transform:scaleX(0.8623)">0.927</span></div>
<div><span class="t b bl" style="left:449.36px;top:486px;transform:scaleX(0.8738)">0.29778</span></div>
<div><span class="t b bl" style="left:561.21px;top:486px;transform:scaleX(0.8771)">1.55623</span></div>
<div><span class="t b" style="left:131.74px;top:491px;transform:scaleX(0.8268)">size (Hedges Adjustment):</span></div>
<div><span class="t b" style="left:28.74px;top:510px;transform:scaleX(0.8821)">Hedges</span></div>
<div><span class="t b" style="left:34.01px;top:523px;transform:scaleX(0.8792)">pooled</span></div>
<div><span class="t b" style="left:25.33px;top:536px;transform:scaleX(0.8566)">standard</span></div>
<div><span class="t b" style="left:23.57px;top:549px;transform:scaleX(0.8482)">deviation:</span></div>
<div><span class="t b nv" style="left:101.08px;top:550px;transform:scaleX(0.8800)">9.00299</span></div>
<div><span class="t b" style="left:201.76px;top:550px;transform:scaleX(0.8627)">Hedges' g:</span></div>
<div><span class="t b rd" style="left:293.46px;top:550px;transform:scaleX(0.8671)">0.92675</span></div>
<div><span class="t b bl" style="left:449.36px;top:550px;transform:scaleX(0.8738)">0.29755</span></div>
<div><span class="t b bl" style="left:561.21px;top:550px;transform:scaleX(0.8771)">1.55596</span></div>
<div><span class="t b bl" style="left:224.70px;top:570px;transform:scaleX(0.8097)">A </span><span class="t b bl" style="left:234.84px;top:570px;transform:scaleX(0.8493)">positive </span><span class="t b bl" style="left:274.06px;top:570px;transform:scaleX(0.8667)">effect </span><span class="t b bl" style="left:304.24px;top:570px;transform:scaleX(0.7943)">size </span><span class="t b bl" style="left:325.34px;top:570px;transform:scaleX(0.8351)">shows </span><span class="t b bl" style="left:358.60px;top:570px;transform:scaleX(0.8299)">the </span><span class="t b bl" style="left:375.79px;top:570px;transform:scaleX(0.8278)">Experimental </span><span class="t b bl" style="left:439.01px;top:570px;transform:scaleX(0.8351)">Group </span><span class="t b bl" style="left:471.60px;top:570px;transform:scaleX(0.8368)">to </span><span class="t b bl" style="left:483.20px;top:570px;transform:scaleX(0.8947)">have </span><span class="t b bl" style="left:510.84px;top:570px;transform:scaleX(0.8356)">scored </span><span class="t b bl" style="left:544.95px;top:570px;transform:scaleX(0.8347)">higher </span><span class="t b bl" style="left:577.90px;top:570px;transform:scaleX(0.8253)">than </span><span class="t b bl" style="left:601.40px;top:570px;transform:scaleX(0.8417)">the </span><span class="t b bl" style="left:619.12px;top:570px;transform:scaleX(0.8204)">Control </span><span class="t b bl" style="left:655.01px;top:570px;transform:scaleX(0.8411)">Group.</span></div>
<div><span class="t m" style="left:7.99px;top:605px;transform:scaleX(0.9000)">The </span><span class="t m" style="left:27.75px;top:605px;transform:scaleX(1.0200)">Effect </span><span class="t m" style="left:59.97px;top:605px;transform:scaleX(0.9000)">Size </span><span class="t m" style="left:82.30px;top:605px;transform:scaleX(0.9743)">Generator </span><span class="t m" style="left:134.13px;top:605px;transform:scaleX(0.9000)">- </span><span class="t m" style="left:141.17px;top:605px;transform:scaleX(0.9878)">www.ClinTools.com</span></div>
<div><span class="t m" style="left:248.86px;top:605px;transform:scaleX(0.9732)">Registered Copy</span></div>
<div><span class="t m" style="left:338.50px;top:605px;transform:scaleX(1.0163)">17/08/2006</span></div>
<div><span class="t m" style="left:435.73px;top:605px;transform:scaleX(0.9662)">4:41 PM</span></div>
</div>
</div>
</body>
</html>
